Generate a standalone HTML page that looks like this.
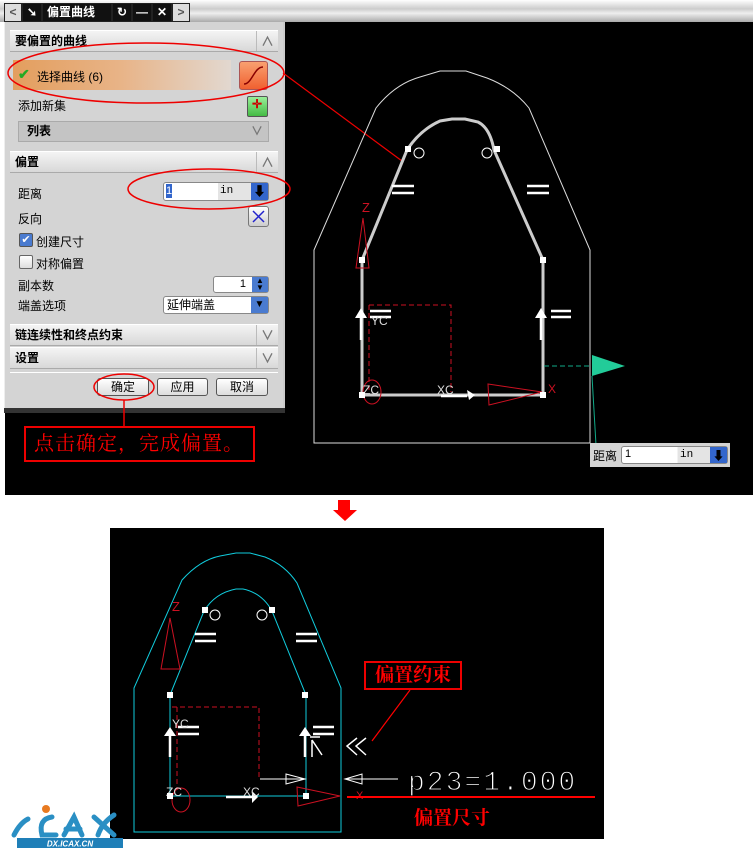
<!DOCTYPE html>
<html><head><meta charset="utf-8"><style>
*{margin:0;padding:0;box-sizing:border-box}
body{width:753px;height:855px;background:#fff;position:relative;overflow:hidden;font-family:"Liberation Sans","Noto Sans CJK SC",sans-serif;font-size:12px;color:#000}
.a{position:absolute}
.hdr{position:absolute;left:10px;width:268px;height:22px;background:linear-gradient(#f4f4f4,#d8d8d8);border-top:1px solid #fff;border-bottom:1px solid #aaa;font-weight:bold;font-size:12px;line-height:21px;padding-left:5px}
.chev{position:absolute;right:0;top:0;width:22px;height:100%;border-left:1px solid #bbb;text-align:center;color:#777;font-size:13px;font-weight:bold}
.btn{position:absolute;top:378px;height:18px;border:1px solid #555;border-radius:3px;background:linear-gradient(#fff,#ddd);text-align:center;line-height:16px;font-size:12px}
.lbl{position:absolute;left:18px;font-size:12px}
</style></head><body>
<!-- top black viewport -->
<div class="a" style="left:5px;top:20px;width:748px;height:475px;background:#000"></div>
<div class="a" style="left:0;top:0;width:753px;height:22px;background:linear-gradient(#fff,#ccc 40%,#eee 60%,#aaa)"></div>
<!-- title bar -->
<div class="a" style="left:4px;top:3px;width:186px;height:20px;background:#222"></div>
<div class="a" style="left:5px;top:4px;width:16px;height:17px;background:#ddd;color:#555;font-weight:bold;text-align:center;line-height:17px">&lt;</div>
<div class="a" style="left:23px;top:4px;width:18px;height:17px;background:#111;color:#fff;text-align:center;line-height:17px;font-weight:bold">➘</div>
<div class="a" style="left:43px;top:4px;width:68px;height:17px;background:#111;color:#fff;font-weight:bold;line-height:17px;padding-left:4px">偏置曲线</div>
<div class="a" style="left:113px;top:4px;width:18px;height:17px;background:#111;color:#fff;font-weight:bold;text-align:center;line-height:17px">↻</div>
<div class="a" style="left:133px;top:4px;width:18px;height:17px;background:#111;color:#fff;font-weight:bold;text-align:center;line-height:17px">—</div>
<div class="a" style="left:153px;top:4px;width:18px;height:17px;background:#111;color:#fff;font-weight:bold;text-align:center;line-height:17px">✕</div>
<div class="a" style="left:173px;top:4px;width:16px;height:17px;background:#ddd;color:#555;font-weight:bold;text-align:center;line-height:17px">&gt;</div>
<!-- dialog panel -->
<div class="a" style="left:4px;top:22px;width:281px;height:388px;background:#d4d4d4;border-left:1px solid #eee;border-right:2px solid #ccc"></div>
<div class="hdr" style="top:30px">要偏置的曲线<div class="chev">∧</div></div>
<div class="a" style="left:13px;top:60px;width:218px;height:30px;background:linear-gradient(90deg,#e39e5e,#e8b488 50%,#e2d8d0)"></div>
<div class="a" style="left:18px;top:66px;color:#2a2;font-size:14px;font-weight:bold">✔</div>
<div class="a" style="left:37px;top:68px">选择曲线 (6)</div>
<div class="a" style="left:239px;top:61px;width:29px;height:29px;border:1px solid #a55;border-radius:3px;background:linear-gradient(#f9a070,#f06030)"><svg width="27" height="27"><path d="M4 22 C12 22 14 5 23 5" stroke="#800" stroke-width="1.5" fill="none"/></svg></div>
<div class="lbl" style="top:97px">添加新集</div>
<div class="a" style="left:247px;top:96px;width:21px;height:21px;border:1px solid #555;border-radius:2px;background:linear-gradient(#9e9,#4b4)"><span style="position:absolute;left:4px;top:0;color:#c00;font-weight:bold">✛</span></div>
<div class="a" style="left:18px;top:121px;width:251px;height:21px;background:#c4c4c4;border:1px solid #aaa;font-weight:bold;line-height:19px;padding-left:8px">列表<span style="position:absolute;right:5px;color:#777">∨</span></div>
<div class="hdr" style="top:151px">偏置<div class="chev">∧</div></div>
<div class="lbl" style="top:185px">距离</div>
<div class="a" style="left:163px;top:182px;width:106px;height:19px;border:1px solid #888;border-radius:3px;background:linear-gradient(90deg,#fff 52%,#e4e4e4 52%)"><span style="position:absolute;left:2px;top:1px;background:#36c;color:#fff;font-size:11px;line-height:14px">1</span><span style="position:absolute;left:56px;top:2px;font-family:'Liberation Mono';font-size:11px">in</span><span style="position:absolute;right:0;top:0;width:17px;height:17px;background:#36c;color:#000;text-align:center;font-size:13px;line-height:17px">⬇</span></div>
<div class="lbl" style="top:210px">反向</div>
<div class="a" style="left:248px;top:206px;width:21px;height:21px;border:1px solid #777;border-radius:3px;background:linear-gradient(#fff,#ccc)"><svg width="19" height="19"><path d="M4 15 L15 4 M4 4 L15 15" stroke="#22c" stroke-width="1.5"/></svg></div>
<div class="a" style="left:19px;top:233px;width:14px;height:14px;border:1px solid #555;border-radius:2px;background:#4a7bd0;color:#fff;font-size:11px;line-height:12px;text-align:center">✔</div>
<div class="a" style="left:36px;top:233px">创建尺寸</div>
<div class="a" style="left:19px;top:255px;width:14px;height:14px;border:1px solid #666;border-radius:2px;background:linear-gradient(#fff,#ddd)"></div>
<div class="a" style="left:36px;top:255px">对称偏置</div>
<div class="lbl" style="top:277px">副本数</div>
<div class="a" style="left:213px;top:276px;width:56px;height:17px;border:1px solid #888;border-radius:3px;background:#fff;font-size:11px"><span style="position:absolute;right:22px;top:1px">1</span><span style="position:absolute;right:0;top:0;width:16px;height:15px;background:#4a7bd0;color:#000;font-size:8px;line-height:7px;text-align:center">▲<br>▼</span></div>
<div class="lbl" style="top:297px">端盖选项</div>
<div class="a" style="left:163px;top:296px;width:106px;height:18px;border:1px solid #888;border-radius:3px;background:#fff;line-height:16px;padding-left:3px">延伸端盖<span style="position:absolute;right:0;top:0;width:17px;height:16px;background:#4a7bd0;text-align:center;font-size:10px">▼</span></div>
<div class="hdr" style="top:324px">链连续性和终点约束<div class="chev">∨</div></div>
<div class="hdr" style="top:347px">设置<div class="chev">∨</div></div>
<div class="a" style="left:10px;top:372px;width:268px;height:1px;background:#fff"></div>
<div class="btn" style="left:97px;width:52px">确定</div>
<div class="btn" style="left:157px;width:51px">应用</div>
<div class="btn" style="left:216px;width:52px">取消</div>
<div class="a" style="left:4px;top:408px;width:281px;height:5px;background:#333"></div>
<!-- top drawing -->
<svg class="a" style="left:0;top:0" width="753" height="495">
<g fill="none">
<ellipse cx="146" cy="73" rx="138" ry="30" stroke="#e00" stroke-width="1.5"/>
<ellipse cx="209" cy="189" rx="81" ry="20" stroke="#e00" stroke-width="1.5"/>
<ellipse cx="124" cy="387" rx="30" ry="13" stroke="#e00" stroke-width="1.5"/>
<line x1="124" y1="400" x2="124" y2="427" stroke="#e00" stroke-width="1.5"/>
<line x1="283" y1="73" x2="402" y2="161" stroke="#e00" stroke-width="1.2"/>
<path d="M314 443 V250 L376 108 Q395 84 420 77 L440 71 H466 L487 78 Q513 88 529 108 L590 250 V443 Z" stroke="#ddd"/>
<path d="M362 395 V260 L407 150 Q420 130 440 121 L452 119 H465 L478 122 Q490 128 494 150 L543 260 V395 Z" stroke="#ccc" stroke-width="3"/>
<path d="M369 305 H451 V392 M369 305 V392" stroke="#c12" stroke-dasharray="5,3"/>
<path d="M356 268 L363 218 L369 268 Z M488 384 L542 392 L489 405 Z" stroke="#c12"/>
<text x="362" y="212" fill="#c12" font-size="13" font-family="Liberation Sans">Z</text>
<text x="548" y="393" fill="#c12" font-size="12" font-family="Liberation Sans">X</text>
<ellipse cx="372" cy="392" rx="9" ry="12" stroke="#c12"/>
<circle cx="419" cy="153" r="5" stroke="#fff"/><circle cx="487" cy="153" r="5" stroke="#fff"/>
<g stroke="#fff" stroke-width="2.5"><path d="M392 186 H414 M392 193 H414 M527 186 H549 M527 193 H549 M370 311 H391 M370 317 H391 M551 311 H571 M551 317 H571 M361 340 V313 M541 340 V313 M441 396 H467"/></g>
<path d="M355 318 L361 308 L367 318 Z M535 318 L541 308 L547 318 Z M467 390 L469 400 L475 395 Z" fill="#fff"/>
<text x="437" y="394" fill="#ddd" font-size="12" font-family="Liberation Sans">XC</text>
<text x="363" y="394" fill="#ddd" font-size="12" font-family="Liberation Sans">ZC</text>
<text x="371" y="325" fill="#ddd" font-size="12" font-family="Liberation Sans">YC</text>
<g fill="#fff"><rect x="405" y="146" width="6" height="6"/><rect x="494" y="146" width="6" height="6"/><rect x="359" y="257" width="6" height="6"/><rect x="540" y="257" width="6" height="6"/><rect x="359" y="392" width="6" height="6"/><rect x="540" y="392" width="6" height="6"/></g>
<path d="M544 366 H590" stroke="#1a8" stroke-dasharray="5,3"/>
<path d="M592 355 L625 366 L592 376 Z" fill="#2c9"/>
<path d="M592 376 L596 445" stroke="#1a8"/>
</g>
</svg>
<div class="a" style="left:590px;top:443px;width:140px;height:24px;background:#d4d4d4"><span style="position:absolute;left:3px;top:4px">距离</span><div class="a" style="left:31px;top:3px;width:107px;height:18px;border:1px solid #888;border-radius:3px;background:linear-gradient(90deg,#fff 53%,#e4e4e4 53%)"><span style="position:absolute;left:3px;top:1px;font-size:11px">1</span><span style="position:absolute;left:58px;top:2px;font-family:'Liberation Mono';font-size:11px">in</span><span style="position:absolute;right:0;top:0;width:17px;height:16px;background:#36c;text-align:center;font-size:12px">⬇</span></div></div>
<div class="a" style="left:24px;top:426px;width:231px;height:36px;border:2px solid #e00;background:#000;color:#f00;font-size:20px;font-family:'Liberation Serif','Noto Serif CJK SC',serif;line-height:32px;padding-left:8px;letter-spacing:1px">点击确定，完成偏置。</div>
<!-- arrow -->
<div class="a" style="left:338px;top:500px;width:12px;height:10px;background:#f00"></div>
<div class="a" style="left:333px;top:510px;width:0;height:0;border-left:12px solid transparent;border-right:12px solid transparent;border-top:11px solid #f00"></div>
<!-- bottom viewport -->
<div class="a" style="left:110px;top:528px;width:494px;height:311px;background:#000"></div>
<svg class="a" style="left:0;top:0" width="753" height="855">
<g fill="none">
<path d="M134 832 V688 L182 580 Q200 560 220 556 L236 553 H250 L265 557 Q285 565 297 583 L341 688 V832 Z" stroke="#1cd"/>
<path d="M170 796 V695 L204 611 Q215 593 236 589 H243 Q262 593 272 611 L306 695 V796 Z" stroke="#1cd"/>
<path d="M172 707 H259 V779 M177 707 V790" stroke="#c12" stroke-dasharray="5,3"/>
<path d="M161 669 L170 618 L180 669 Z M297 787 L340 796 L298 806 Z" stroke="#c12"/>
<text x="172" y="611" fill="#c12" font-size="13" font-family="Liberation Sans">Z</text>
<text x="356" y="799" fill="#c12" font-size="11" font-family="Liberation Sans">X</text>
<ellipse cx="181" cy="800" rx="9" ry="12" stroke="#c12"/>
<circle cx="215" cy="615" r="5" stroke="#fff"/><circle cx="262" cy="615" r="5" stroke="#fff"/>
<g stroke="#fff" stroke-width="2.5"><path d="M195 634 H216 M195 641 H216 M296 634 H317 M296 641 H317 M178 727 H199 M178 734 H199 M313 727 H334 M313 734 H334 M170 757 V730 M305 757 V730 M226 797 H252"/></g>
<path d="M164 736 L170 727 L176 736 Z M299 736 L305 727 L311 736 Z M252 791 L258 797 L252 803 Z" fill="#fff"/>
<path d="M310 737 L320 737 M312 740 L322 755 M312 740 V757 M357 738 L347 746 L357 755 M366 738 L356 746 L366 755" stroke="#fff" stroke-width="1.5"/>
<path d="M260 779 H305 M286 774 L305 779 L286 784 Z M345 779 H398 M345 779 L362 774 V784 Z" stroke="#fff"/>
<text x="408" y="790" fill="#fff" font-size="28" font-family="Liberation Mono" letter-spacing="2" style="font-weight:100" stroke="#000" stroke-width="1.2">p23=1.000</text>
<line x1="347" y1="797" x2="595" y2="797" stroke="#f00" stroke-width="2"/>
<text x="172" y="728" fill="#ddd" font-size="12" font-family="Liberation Sans">YC</text>
<text x="243" y="796" fill="#ddd" font-size="12" font-family="Liberation Sans">XC</text>
<text x="166" y="796" fill="#ddd" font-size="12" font-family="Liberation Sans">ZC</text>
<g fill="#fff"><rect x="202" y="607" width="6" height="6"/><rect x="269" y="607" width="6" height="6"/><rect x="167" y="692" width="6" height="6"/><rect x="302" y="692" width="6" height="6"/><rect x="167" y="793" width="6" height="6"/><rect x="303" y="793" width="6" height="6"/></g>
<line x1="410" y1="690" x2="372" y2="741" stroke="#f00" stroke-width="1.2"/>
</g>
</svg>
<div class="a" style="left:364px;top:661px;width:98px;height:29px;border:2px solid #e00;color:#f00;font-size:19px;font-family:'Liberation Serif','Noto Serif CJK SC',serif;line-height:25px;text-align:center;font-weight:bold">偏置约束</div>
<div class="a" style="left:414px;top:803px;color:#f00;font-size:19px;font-family:'Liberation Serif','Noto Serif CJK SC',serif;font-weight:bold">偏置尺寸</div>
<!-- logo -->
<svg class="a" style="left:8px;top:805px" width="120" height="46">
<g fill="none" stroke="#2a8fc4" stroke-width="5" stroke-linecap="round">
<path d="M6 30 Q12 18 20 14"/><path d="M44 12 Q30 14 34 30 H48"/><path d="M56 30 L66 12 L74 30 M58 24 H72"/><path d="M86 12 L106 30 M106 10 Q94 18 90 30"/>
</g>
<circle cx="38" cy="4" r="4" fill="#e87a20"/>
<rect x="9" y="33" width="106" height="10" fill="#1f7fb8"/>
<text x="62" y="41.5" fill="#fff" font-size="8" font-weight="bold" font-style="italic" text-anchor="middle" font-family="Liberation Sans">DX.ICAX.CN</text>
</svg>
</body></html>
